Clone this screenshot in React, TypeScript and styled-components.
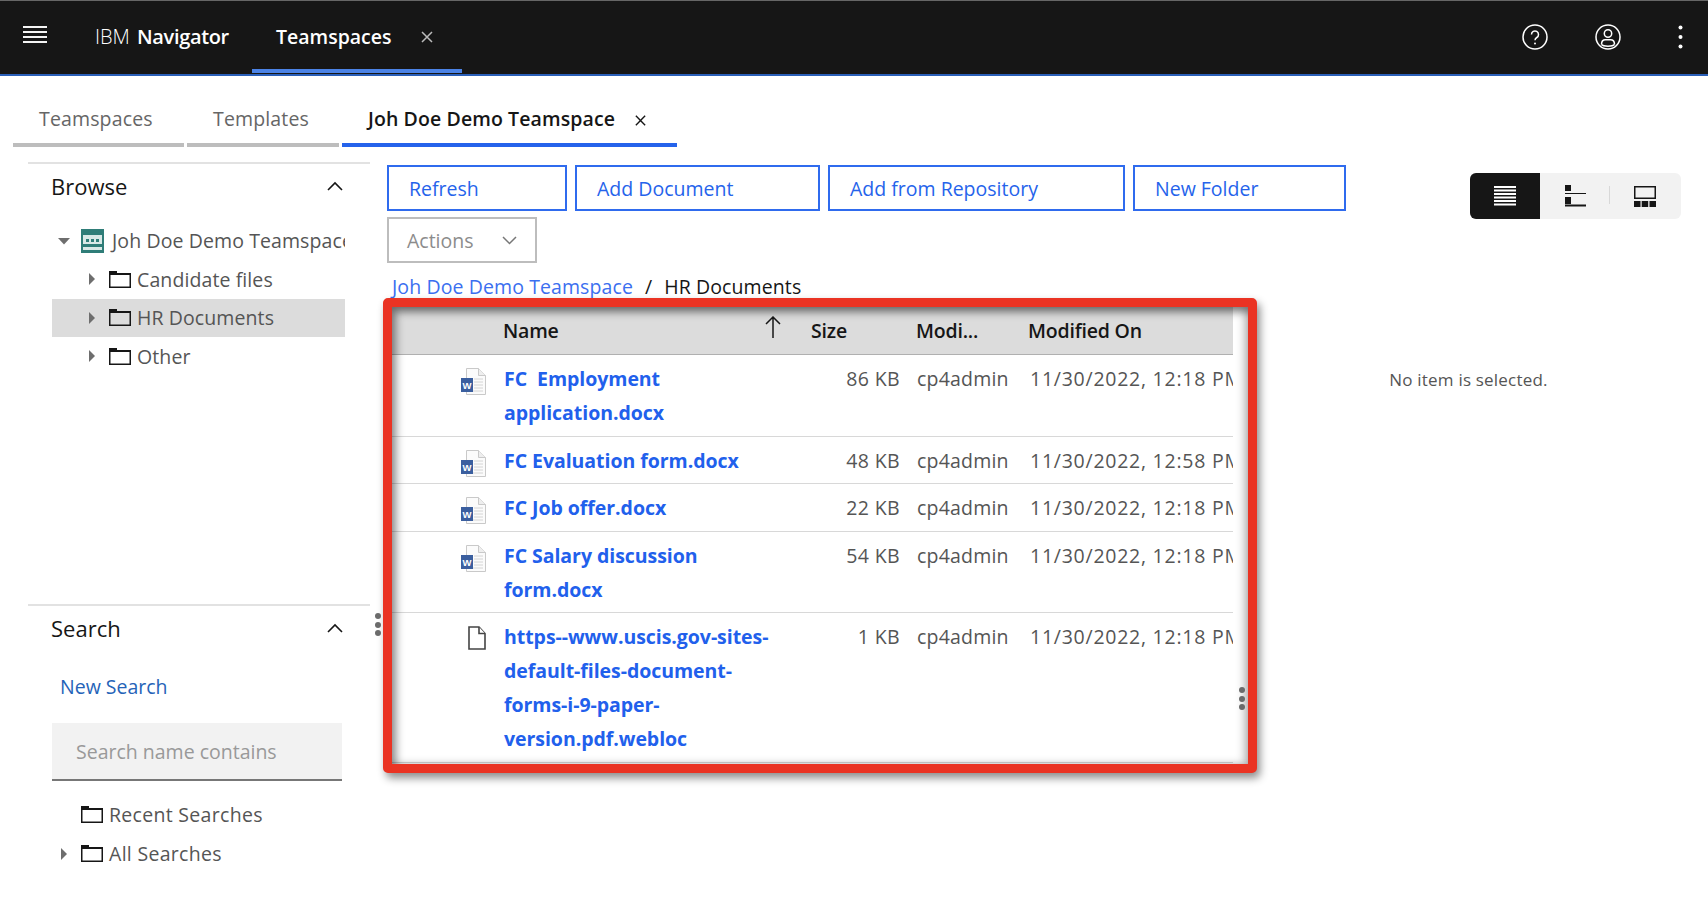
import React from "react";
import styled, { createGlobalStyle } from "styled-components";

const FONT = `"Open Sans", "Noto Sans", "Liberation Sans", sans-serif`;

const Global = createGlobalStyle`
  html, body { margin: 0; padding: 0; background: #fff; }
  * { box-sizing: border-box; }
  body { font-family: ${FONT}; }
`;

const Page = styled.div`
  width: 1708px;
  height: 918px;
  overflow: hidden;
  display: flex;
  flex-direction: column;
  background: #fff;
`;

const Header = styled.header`
  height: 76px;
  flex: none;
  display: flex;
  align-items: flex-start;
  background: #161616;
  border-top: 1px solid #666;
  border-bottom: 2px solid #2a5fb8;
  color: #fff;
`;
const Burger = styled.div`
  width: 24px;
  margin: 25px 0 0 23px;
  height: 17px;
  display: flex;
  flex-direction: column;
  justify-content: space-between;
  span { display: block; height: 2px; background: #f4f4f4; }
`;
const Brand = styled.div`
  margin-left: 48px;
  width: 157px;
  font-size: 20px;
  line-height: 71px;
  font-weight: 300;
  white-space: nowrap;
  b { font-weight: 600; margin-left: 2px; letter-spacing: -0.35px; }
`;
const HeaderTab = styled.div`
  width: 210px;
  display: flex;
  align-items: center;
  padding: 3px 0 0 24px;
  height: 72px;
  border-bottom: 4px solid #4b83e6;
  font-size: 19.5px;
  font-weight: 600;
  white-space: nowrap;
  svg { margin-left: 28px; }
`;
const HeaderActions = styled.div`
  margin-left: auto;
  height: 72px;
  display: flex;
  align-items: center;
  gap: 47px;
  padding: 0 25px 1px 0;
  svg:last-child { margin-left: 10px; }
`;

const TabBar = styled.nav`
  height: 71px;
  flex: none;
  display: flex;
  align-items: flex-end;
  gap: 3px;
  padding-left: 13px;
`;
const Tab = styled.div<{ $active?: boolean; $w: number }>`
  width: ${(p) => p.$w}px;
  height: 56px;
  padding: 14px 0 0 26px;
  display: flex;
  align-items: flex-start;
  line-height: 28px;
  font-size: 19.5px;
  letter-spacing: ${(p) => (p.$active ? "0.1px" : "0.15px")};
  white-space: nowrap;
  color: ${(p) => (p.$active ? "#161616" : "#666")};
  font-weight: ${(p) => (p.$active ? 600 : 400)};
  border-bottom: 4px solid ${(p) => (p.$active ? "#2563eb" : "#bdbdbd")};
  svg { margin: 9px 0 0 19px; }
`;

const Body = styled.div`
  flex: 1;
  display: flex;
  margin-top: 15px;
  min-height: 0;
`;
const Sidebar = styled.aside`
  width: 342px;
  flex: none;
  margin-left: 28px;
`;
const Section = styled.section<{ $h: number }>`
  height: ${(p) => p.$h}px;
  border-top: 2px solid #e2e2e2;
`;
const SectionHead = styled.div`
  height: 43px;
  display: flex;
  align-items: center;
  justify-content: space-between;
  padding: 0 27px 0 23px;
  font-size: 22px;
  color: #161616;
`;
const Tree = styled.div`
  padding-top: 14.5px;
  width: 317px;
`;
const TreeRow = styled.div<{ $indent: number; $selected?: boolean }>`
  height: 38.5px;
  margin-left: 24px;
  display: flex;
  align-items: center;
  padding-left: ${(p) => p.$indent}px;
  font-size: 19.5px;
  letter-spacing: 0.1px;
  color: #555;
  white-space: nowrap;
  overflow: hidden;
  background: ${(p) => (p.$selected ? "#dcdcdc" : "transparent")};
`;
const CaretSlot = styled.span`
  width: 23px;
  flex: none;
  display: flex;
  align-items: center;
  svg { display: block; }
`;
const CaretRightSvg = styled.svg`
  margin-left: 2px;
`;
const TreeIcon = styled.span<{ $gap?: number }>`
  flex: none;
  display: flex;
  margin-right: ${(p) => p.$gap ?? 6}px;
`;
const NewSearch = styled.div`
  margin: 20px 0 0 32px;
  height: 36px;
  line-height: 36px;
  font-size: 19.5px;
  color: #2563b8;
`;
const SearchBox = styled.div`
  margin: 18px 0 0 24px;
  width: 290px;
  height: 58px;
  padding-left: 24px;
  display: flex;
  align-items: center;
  background: #f2f2f2;
  border-bottom: 2px solid #777;
  font-size: 19.5px;
  color: #999;
`;
const SearchTree = styled.div`
  margin-top: 14px;
  width: 317px;
  ${TreeRow} { height: 39px; letter-spacing: 0.3px; }
`;

const Main = styled.main`
  margin-left: 13px;
  flex: 1;
  min-width: 0;
  display: flex;
  flex-direction: column;
`;
const TopRow = styled.div`
  flex: none;
  height: 113px;
  display: flex;
  justify-content: space-between;
  padding: 3px 27px 0 4px;
`;
const Toolbar = styled.div`
  width: 962px;
  display: flex;
  flex-wrap: wrap;
  align-content: flex-start;
  gap: 6px 8px;
`;
const OutlineButton = styled.div<{ $w: number }>`
  width: ${(p) => p.$w}px;
  height: 46px;
  padding-left: 20px;
  display: flex;
  align-items: center;
  border: 2px solid #2f6bee;
  font-size: 19.5px;
  color: #2563eb;
`;
const ActionsButton = styled.div`
  width: 150px;
  height: 46px;
  padding: 0 18px;
  display: flex;
  align-items: center;
  justify-content: space-between;
  border: 2px solid #bdbdbd;
  font-size: 19.5px;
  color: #8c8c8c;
`;
const ViewToggle = styled.div`
  margin-top: 8px;
  width: 211px;
  height: 46px;
  display: flex;
  align-items: center;
  border-radius: 6px;
  background: #f2f2f2;
  overflow: hidden;
`;
const ToggleItem = styled.div<{ $active?: boolean; $divider?: boolean }>`
  width: 70px;
  height: 100%;
  display: flex;
  align-items: center;
  justify-content: center;
  background: ${(p) => (p.$active ? "#161616" : "transparent")};
  position: relative;
  ${(p) =>
    p.$divider &&
    `&::after { content: ""; position: absolute; right: 0; top: 13px; height: 18px; width: 1px; background: #d8d8d8; }`}
`;

const LowerRow = styled.div`
  flex: 1;
  display: flex;
  min-height: 0;
`;
const ListColumn = styled.div`
  width: 874px;
  flex: none;
`;
const Breadcrumb = styled.div`
  height: 23px;
  padding-left: 9px;
  line-height: 24px;
  font-size: 19.5px;
  letter-spacing: 0.1px;
  white-space: nowrap;
  color: #161616;
  a { color: #3b6ff0; }
  i { font-style: normal; margin: 0 12px; }
`;
const Frame = styled.div`
  position: relative;
  height: 475px;
  border: 9px solid #ea3323;
  border-radius: 5px;
  box-shadow: 3px 5px 9px rgba(0, 0, 0, 0.45);
  background: #fff;
  &::after {
    content: "";
    position: absolute;
    inset: 0;
    pointer-events: none;
    box-shadow: inset 4px 5px 8px rgba(0, 0, 0, 0.45), inset -4px 0 8px rgba(0, 0, 0, 0.25);
  }
`;
const Table = styled.div`
  width: 841px;
  overflow: hidden;
`;
const HeadRow = styled.div`
  display: grid;
  grid-template-columns: 111px 308px 105px 112px 205px;
  height: 48px;
  align-items: center;
  background: #dcdcdc;
  border-bottom: 1px solid #b0b0b0;
  font-size: 19.5px;
  font-weight: 600;
  letter-spacing: -0.2px;
  color: #161616;
`;
const HeadCell = styled.div<{ $arrow?: boolean }>`
  display: flex;
  align-items: center;
  justify-content: space-between;
  padding-right: ${(p) => (p.$arrow ? "30px" : "0")};
  svg { margin-top: -8px; }
`;
const Row = styled.div`
  display: grid;
  grid-template-columns: 111px 308px 105px 112px 205px;
  align-items: start;
  padding: 7px 0 5.4px;
  border-bottom: 1px solid #d8d8d8;
  line-height: 34.1px;
  font-size: 19.5px;
  color: #555;
  white-space: nowrap;
`;
const IconCell = styled.div`
  display: flex;
  justify-content: flex-end;
  padding: 6px 17px 0 0;
`;
const NameCell = styled.div`
  width: 282px;
  padding-left: 1px;
  white-space: normal;
  font-weight: 700;
  letter-spacing: -0.05px;
  color: #2160ec;
`;
const SizeCell = styled.div`
  text-align: right;
  margin-left: -100px;
  padding-right: 16px;
  letter-spacing: 0.35px;
`;
const OwnerCell = styled.div`
  padding-left: 1px;
  letter-spacing: 0.2px;
`;
const DateCell = styled.div`
  padding-left: 2px;
  overflow: hidden;
  letter-spacing: 0.75px;
`;
const Dots = styled.div<{ $x: number; $y: number }>`
  position: absolute;
  left: ${(p) => p.$x}px;
  top: ${(p) => p.$y}px;
  z-index: 2;
  display: flex;
  flex-direction: column;
  gap: 2.5px;
  span { width: 6px; height: 6px; border-radius: 50%; background: #6b6b6b; }
`;
const Details = styled.div`
  flex: 1;
  padding: 92px 28px 0 0;
  text-align: center;
  line-height: 26px;
  font-size: 17px;
  letter-spacing: 0.2px;
  color: #555;
`;
const SideWrap = styled.div`
  position: relative;
`;

const Close = ({ c = "#fff", s = 14 }: { c?: string; s?: number }) => (
  <svg width={s} height={s} viewBox="0 0 14 14" fill="none" stroke={c} strokeWidth="1.5">
    <path d="M2 2l10 10M12 2L2 12" />
  </svg>
);
const ChevronUp = () => (
  <svg width="16" height="10" viewBox="0 0 16 10" fill="none" stroke="#161616" strokeWidth="1.6">
    <path d="M1 9l7-7 7 7" />
  </svg>
);
const ChevronDown = () => (
  <svg width="15" height="9" viewBox="0 0 15 9" fill="none" stroke="#777" strokeWidth="1.5">
    <path d="M1 1l6.5 6.5L14 1" />
  </svg>
);
const CaretRight = () => (
  <CaretRightSvg width="8" height="12" viewBox="0 0 8 12"><path d="M1 0l6 6-6 6z" fill="#6e6e6e" /></CaretRightSvg>
);
const CaretDown = () => (
  <svg width="12" height="8" viewBox="0 0 12 8"><path d="M0 1h12L6 7.500z" fill="#6e6e6e" /></svg>
);
const Folder = ({ fill = "#fff" }: { fill?: string }) => (
  <svg width="22" height="17" viewBox="0 0 22 17">
    <path d="M0 0h8v2h14v15H0z" fill="#161616" />
    <rect x="1.500" y="4" width="19" height="11.500" fill={fill} />
  </svg>
);
const TeamIcon = () => (
  <svg width="23" height="24" viewBox="0 0 23 24">
    <rect width="23" height="24" fill="#2f7d78" />
    <rect x="2" y="6" width="19" height="15" fill="#d8e8e6" />
    <rect x="5" y="10" width="3" height="3" fill="#2f7d78" />
    <rect x="10" y="10" width="3" height="3" fill="#2f7d78" />
    <rect x="15" y="10" width="3" height="3" fill="#2f7d78" />
    <rect x="2" y="15" width="19" height="3" fill="#2f7d78" />
  </svg>
);
const WordIcon = () => (
  <svg width="25" height="27" viewBox="0 0 25 27">
    <path d="M5.500.5h12l7 7v19h-19z" fill="#fbfbfb" stroke="#c9c9c9" />
    <path d="M17.500.5v7h7" fill="#eee" stroke="#c9c9c9" />
    <path d="M13 11h9M13 14h9M13 17h9M13 20h9M7 23h15" stroke="#d4d4d4" />
    <rect y="10" width="12" height="14" fill="#3b5f9f" />
    <text x="6" y="20.500" textAnchor="middle" fontSize="9.500" fontWeight="700" fill="#fff" fontFamily="Liberation Sans, sans-serif">W</text>
  </svg>
);
const FileIcon = () => (
  <svg width="18" height="24" viewBox="0 0 18 24" fill="#fff" stroke="#444" strokeWidth="1.6">
    <path d="M1 1h10l6 6.500V23H1z" />
    <path d="M11 1v6.500h6" />
  </svg>
);
const HelpIcon = () => (
  <svg width="26" height="26" viewBox="0 0 26 26" fill="none" stroke="#fff" strokeWidth="1.5">
    <circle cx="13" cy="13" r="12" />
    <path d="M9.500 10.500a3.500 3.500 0 1 1 5.300 3c-1.300.8-1.800 1.400-1.800 2.700" />
    <circle cx="13" cy="19.500" r="1" fill="#fff" stroke="none" />
  </svg>
);
const UserIcon = () => (
  <svg width="26" height="26" viewBox="0 0 26 26" fill="none" stroke="#fff" strokeWidth="1.5">
    <circle cx="13" cy="13" r="12" />
    <circle cx="13" cy="9.500" r="3.700" />
    <path d="M6.500 20.500c0-3 1.700-4.700 4-4.700h5c2.300 0 4 1.700 4 4.700" />
    <path d="M6.500 20.500c1.800 2.200 11.200 2.200 13 0" />
  </svg>
);
const Kebab = () => (
  <svg width="5" height="24" viewBox="0 0 5 24" fill="#fff">
    <circle cx="2.500" cy="2.500" r="2" />
    <circle cx="2.500" cy="12" r="2" />
    <circle cx="2.500" cy="21.500" r="2" />
  </svg>
);
const SortArrow = () => (
  <svg width="16" height="22" viewBox="0 0 16 22" fill="none" stroke="#161616" strokeWidth="1.5">
    <path d="M8 22V1M1 8l7-7 7 7" />
  </svg>
);
const ListView = () => (
  <svg width="22" height="20" viewBox="0 0 22 20" fill="#fff">
    {[0, 3.500, 7, 10.500, 14, 17.500].map((y) => (
      <rect key={y} y={y} width="22" height="2" />
    ))}
  </svg>
);
const TreeView = () => (
  <svg width="21" height="22" viewBox="0 0 21 22" fill="#161616">
    <rect width="6" height="6" />
    <rect y="8" width="21" height="1" />
    <rect y="12" width="6" height="7" />
    <rect y="19.500" width="21" height="2" />
  </svg>
);
const TileView = () => (
  <svg width="22" height="21" viewBox="0 0 22 21" fill="#161616">
    <path d="M0 0h22v13H0zM1.500 1.500v10h19v-10z" fillRule="evenodd" />
    <rect y="15" width="6.500" height="6" />
    <rect x="7.700" y="15" width="6.500" height="6" />
    <rect x="15.500" y="15" width="6.500" height="6" />
  </svg>
);

const DotHandle = ({ x, y }: { x: number; y: number }) => (
  <Dots $x={x} $y={y}><span /><span /><span /></Dots>
);

const files = [
  { name: "FC\u00a0 Employment application.docx", size: "86 KB", date: "11/30/2022, 12:18 PM", word: true },
  { name: "FC Evaluation form.docx", size: "48 KB", date: "11/30/2022, 12:58 PM", word: true },
  { name: "FC Job offer.docx", size: "22 KB", date: "11/30/2022, 12:18 PM", word: true },
  { name: "FC Salary discussion form.docx", size: "54 KB", date: "11/30/2022, 12:18 PM", word: true },
  { name: "https--www.uscis.gov-sites-default-files-document-forms-i-9-paper-version.pdf.webloc", size: "1 KB", date: "11/30/2022, 12:18 PM", word: false },
];

export default function App() {
  return (
    <Page>
      <Global />
      <Header>
        <Burger><span /><span /><span /><span /></Burger>
        <Brand>IBM <b>Navigator</b></Brand>
        <HeaderTab>Teamspaces<Close c="#bbb" /></HeaderTab>
        <HeaderActions>
          <HelpIcon />
          <UserIcon />
          <Kebab />
        </HeaderActions>
      </Header>

      <TabBar>
        <Tab $w={171}>Teamspaces</Tab>
        <Tab $w={152}>Templates</Tab>
        <Tab $w={335} $active>Joh Doe Demo Teamspace<Close c="#161616" s={13} /></Tab>
      </TabBar>

      <Body>
        <Sidebar>
          <Section $h={442}>
            <SectionHead>Browse<ChevronUp /></SectionHead>
            <Tree>
              <TreeRow $indent={6}>
                <CaretSlot><CaretDown /></CaretSlot>
                <TreeIcon $gap={8}><TeamIcon /></TreeIcon>
                Joh Doe Demo Teamspace
              </TreeRow>
              <TreeRow $indent={34}>
                <CaretSlot><CaretRight /></CaretSlot>
                <TreeIcon><Folder /></TreeIcon>Candidate files
              </TreeRow>
              <TreeRow $indent={34} $selected>
                <CaretSlot><CaretRight /></CaretSlot>
                <TreeIcon><Folder fill="#dcdcdc" /></TreeIcon>HR Documents
              </TreeRow>
              <TreeRow $indent={34}>
                <CaretSlot><CaretRight /></CaretSlot>
                <TreeIcon><Folder /></TreeIcon>Other
              </TreeRow>
            </Tree>
          </Section>
          <SideWrap>
            <DotHandle x={347} y={9} />
            <Section $h={300}>
              <SectionHead>Search<ChevronUp /></SectionHead>
              <NewSearch>New Search</NewSearch>
              <SearchBox>Search name contains</SearchBox>
              <SearchTree>
                <TreeRow $indent={6}>
                  <CaretSlot />
                  <TreeIcon><Folder /></TreeIcon>Recent Searches
                </TreeRow>
                <TreeRow $indent={6}>
                  <CaretSlot><CaretRight /></CaretSlot>
                  <TreeIcon><Folder /></TreeIcon>All Searches
                </TreeRow>
              </SearchTree>
            </Section>
          </SideWrap>
        </Sidebar>

        <Main>
          <TopRow>
            <Toolbar>
              <OutlineButton $w={180}>Refresh</OutlineButton>
              <OutlineButton $w={245}>Add Document</OutlineButton>
              <OutlineButton $w={297}>Add from Repository</OutlineButton>
              <OutlineButton $w={213}>New Folder</OutlineButton>
              <ActionsButton>Actions<ChevronDown /></ActionsButton>
            </Toolbar>
            <ViewToggle>
              <ToggleItem $active><ListView /></ToggleItem>
              <ToggleItem $divider><TreeView /></ToggleItem>
              <ToggleItem><TileView /></ToggleItem>
            </ViewToggle>
          </TopRow>
          <LowerRow>
            <ListColumn>
              <Breadcrumb><a>Joh Doe Demo Teamspace</a><i>/</i>HR Documents</Breadcrumb>
              <Frame>
                <DotHandle x={847} y={380} />
                <Table>
                  <HeadRow>
                    <span />
                    <HeadCell $arrow>Name<SortArrow /></HeadCell>
                    <HeadCell>Size</HeadCell>
                    <HeadCell>Modi...</HeadCell>
                    <HeadCell>Modified On</HeadCell>
                  </HeadRow>
                  {files.map((f) => (
                    <Row key={f.name}>
                      <IconCell>{f.word ? <WordIcon /> : <FileIcon />}</IconCell>
                      <NameCell>{f.name}</NameCell>
                      <SizeCell>{f.size}</SizeCell>
                      <OwnerCell>cp4admin</OwnerCell>
                      <DateCell>{f.date}</DateCell>
                    </Row>
                  ))}
                </Table>
              </Frame>
            </ListColumn>
            <Details>No item is selected.</Details>
          </LowerRow>
        </Main>
      </Body>
    </Page>
  );
}
